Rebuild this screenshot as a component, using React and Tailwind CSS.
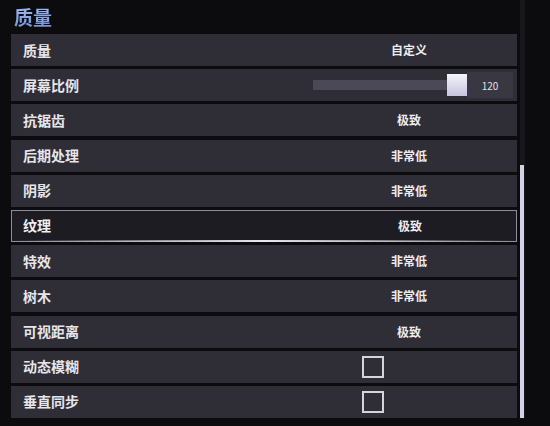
const rows = [
  { label: '质量', value: '自定义' },
  { label: '屏幕比例', type: 'slider', value: '120' },
  { label: '抗锯齿', value: '极致' },
  { label: '后期处理', value: '非常低' },
  { label: '阴影', value: '非常低' },
  { label: '纹理', value: '极致', selected: true },
  { label: '特效', value: '非常低' },
  { label: '树木', value: '非常低' },
  { label: '可视距离', value: '极致' },
  { label: '动态模糊', type: 'check' },
  { label: '垂直同步', type: 'check' },
]

const font = { fontFamily: '"Noto Sans CJK SC", "Noto Sans", sans-serif' }

function Row({ label, value, type, selected }) {
  if (type === 'slider') {
    return (
      <div className="flex h-[32px] items-center bg-[#2f2d36]">
        <span className="pl-[12px] text-[14px] font-bold text-[#e6e6ea]">{label}</span>
        <div className="ml-auto mr-[4px] flex items-center">
          <div className="h-[10px] w-[134px] bg-[#4b4858]" />
          <div className="h-[22px] w-[20px] bg-gradient-to-b from-[#f4f4fa] to-[#c6c4de]" />
          <div className="flex h-[26px] w-[46px] items-center justify-center bg-[#393742] text-[10px] text-[#e0e0e6]">
            {value}
          </div>
        </div>
      </div>
    )
  }
  return (
    <div
      className={
        selected
          ? 'relative grid h-[32px] grid-cols-[351px_94px_1fr] items-center border border-[#8e8c98] bg-[#1e1c23]'
          : 'grid h-[32px] grid-cols-[351px_94px_1fr] items-center bg-[#2f2d36]'
      }
    >
      <span className={selected ? 'pl-[11px] text-[14px] font-bold text-[#eeeef2]' : 'pl-[12px] text-[14px] font-bold text-[#e6e6ea]'}>
        {label}
      </span>
      {type === 'check' ? (
        <div className="h-[22px] w-[22px] border-2 border-[#d4d4da]" />
      ) : (
        <span className="text-center text-[12px] font-bold text-[#ececf0]">{value}</span>
      )}
      <span />
      {selected && (
        <div className="absolute bottom-[-1px] left-0 h-[2px] w-full bg-gradient-to-r from-transparent via-[#e8e8f0] to-transparent" />
      )}
    </div>
  )
}

export default function App() {
  return (
    <div className="flex h-[426px] w-[550px] overflow-hidden bg-[#0c0b0e] pl-[11px]" style={font}>
      <div className="flex w-[506px] flex-col">
        <div className="flex h-[34px] items-center pl-[3px]">
          <span className="bg-gradient-to-b from-[#a9c2f4] to-[#6d8cd6] bg-clip-text text-[19px] font-bold text-transparent">
            质量
          </span>
        </div>
        <div className="flex flex-col gap-[3.2px]">
          {rows.map((r) => (
            <Row key={r.label} {...r} />
          ))}
        </div>
      </div>
      <div className="ml-[3px] flex h-[418px] w-[5px] flex-col bg-[#18171c]">
        <div className="mt-[165px] h-[253px] w-[4px] bg-[#d4d2e6]" />
      </div>
    </div>
  )
}
